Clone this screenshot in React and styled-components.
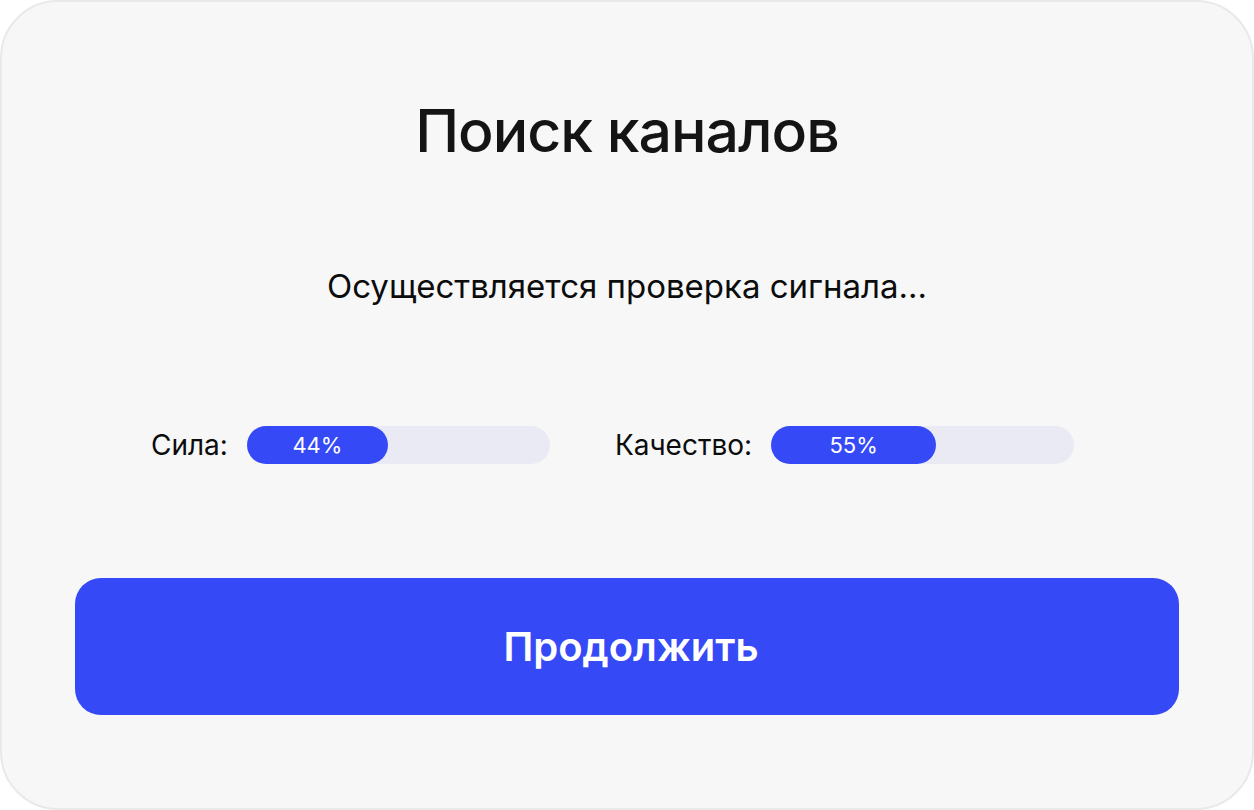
import React from 'react';
import styled, { createGlobalStyle } from 'styled-components';

const GlobalStyle = createGlobalStyle`
  html, body {
    margin: 0;
    padding: 0;
    background: #ffffff;
  }
  body {
    font-family: 'Inter', 'Noto Sans', sans-serif;
  }
`

const Card = styled.div`
  box-sizing: border-box;
  width: 1254px;
  height: 810px;
  background: #f7f7f7;
  border: 2px solid #e9e9e9;
  border-radius: 58px;
  padding: 98px 73px 0;
  display: flex;
  flex-direction: column;
  align-items: center;
`

const Title = styled.h1`
  margin: 0;
  font-size: 59px;
  font-weight: 500;
  line-height: 62px;
  color: #141414;
  letter-spacing: -1px;
`

const Subtitle = styled.p`
  margin: 106px 0 0;
  font-size: 33px;
  line-height: 36px;
  color: #0c0c0c;
`

const MeterRow = styled.div`
  align-self: stretch;
  display: flex;
  align-items: center;
  margin-top: 122px;
  padding-left: 76px;
  gap: 65px;
`

const Meter = styled.div`
  display: flex;
  align-items: center;
  gap: 19px;
`

const Label = styled.span`
  font-size: 28px;
  color: #0c0c0c;
`

const Track = styled.div`
  width: 303px;
  height: 38px;
  border-radius: 19px;
  background: #eaeaf5;
  display: flex;
`

const Fill = styled.div`
  height: 100%;
  border-radius: 19px;
  background: #3649f7;
  color: #ffffff;
  font-size: 22px;
  display: flex;
  align-items: center;
  justify-content: center;
`

const ContinueButton = styled.button`
  align-self: stretch;
  margin-top: 114px;
  height: 137px;
  border: none;
  border-radius: 26px;
  background: #3649f7;
  color: #ffffff;
  font-family: 'Inter', 'Noto Sans', sans-serif;
  font-size: 40px;
  font-weight: 600;
  padding: 0 0 0 8px;
  cursor: pointer;
`

const meters = [
  { label: 'Сила:', value: 44, width: 141 },
  { label: 'Качество:', value: 55, width: 165 },
]

const App = () => {
  return (
    <>
      <GlobalStyle />
      <Card>
        <Title>Поиск каналов</Title>
        <Subtitle>Осуществляется проверка сигнала...</Subtitle>
        <MeterRow>
          {meters.map((m) => (
            <Meter key={m.label}>
              <Label>{m.label}</Label>
              <Track>
                <Fill style={{ width: m.width }}>{m.value}%</Fill>
              </Track>
            </Meter>
          ))}
        </MeterRow>
        <ContinueButton>Продолжить</ContinueButton>
      </Card>
    </>
  )
}

export default App;
